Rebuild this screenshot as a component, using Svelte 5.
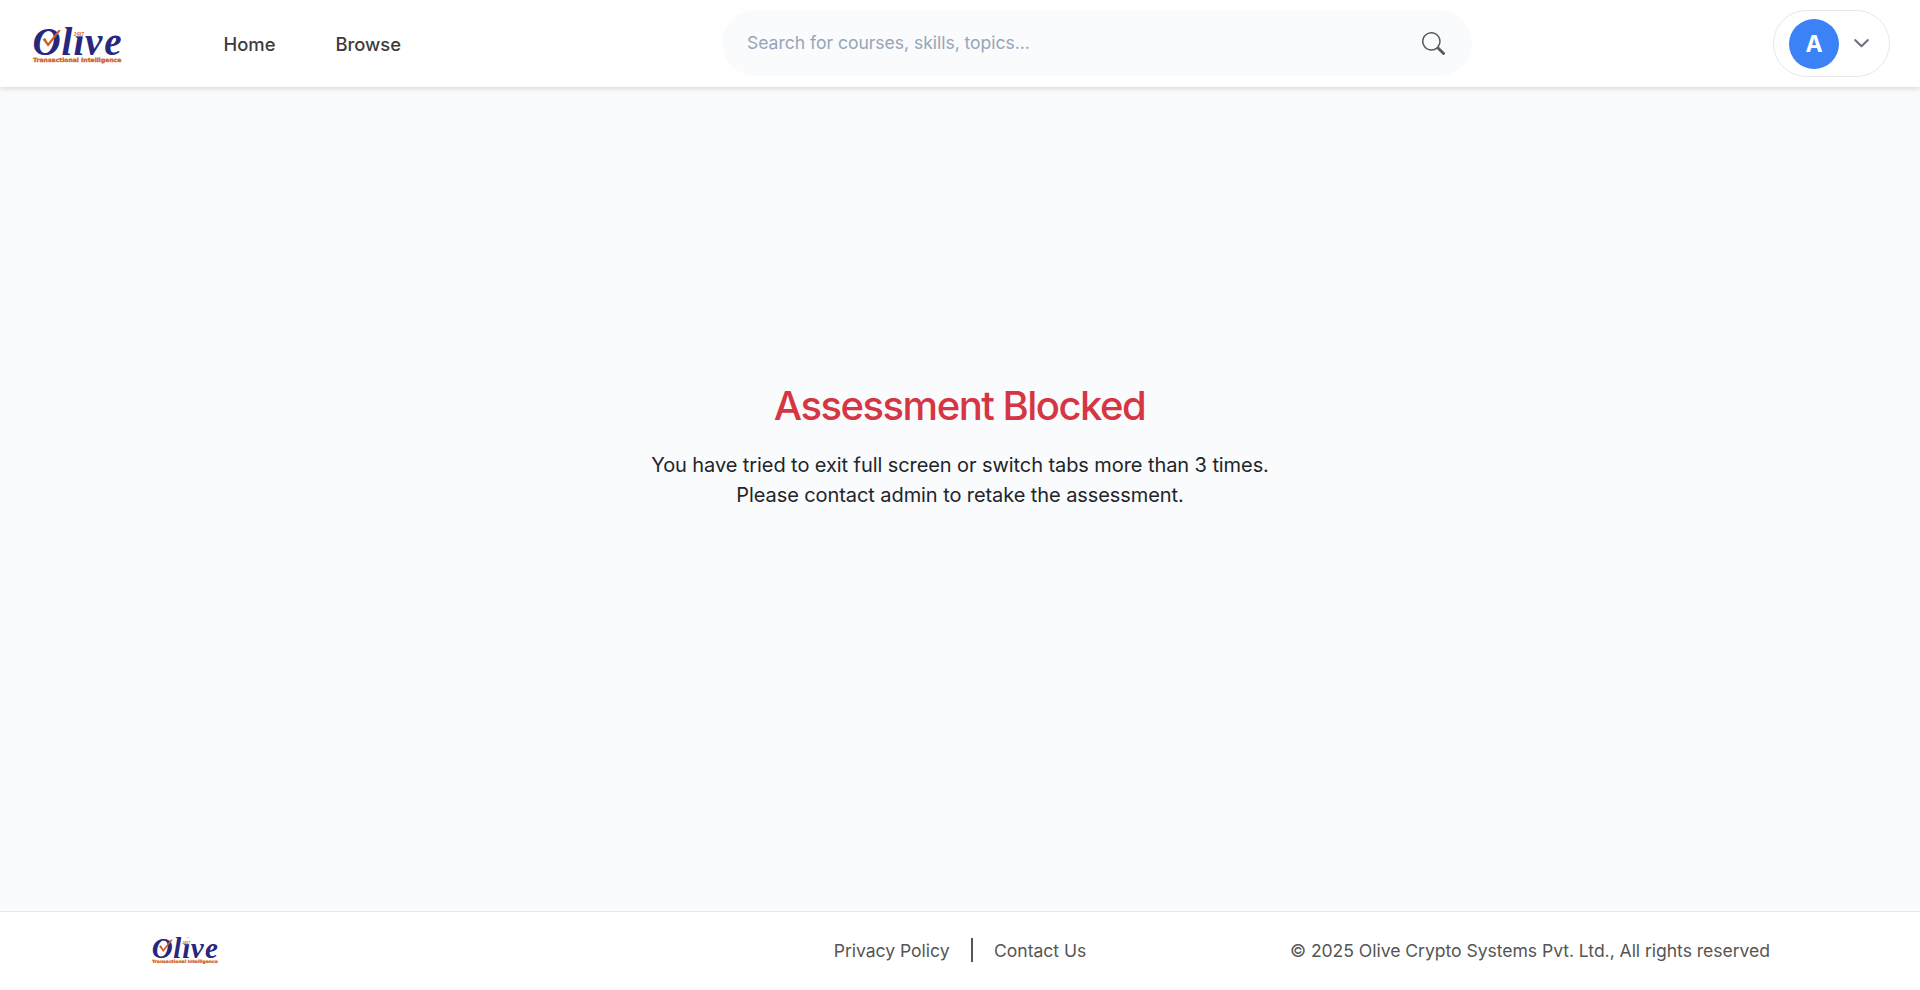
<script>
  const nav = ['Home', 'Browse'];
</script>

{#snippet logo(width)}
  <svg class="logo" {width} height={width * 0.4} viewBox="0 0 90 36" role="img" aria-label="Olive Transactional Intelligence">
    <text y="27" x="-0.5 28.5 40.5 52 71.3" class="word">Olive</text>
    <path d="M40 -1h12v9.3h-12z" fill="#fff" />
    <path d="M9.5 11.2l2.6-1.3 3 5.2L25.5 2l2.4.2-12.8 16.6z" fill="#cf5f20" />
    <text x="41" y="8" textLength="10" lengthAdjust="spacingAndGlyphs" class="mark">24X7</text>
    <text x="0" y="33.8" textLength="88.5" lengthAdjust="spacingAndGlyphs" class="tag">Transactional Intelligence</text>
  </svg>
{/snippet}

<div class="page">
  <header>
    <div class="brand">{@render logo(90)}</div>
    <nav>
      {#each nav as item}<a href="#top">{item}</a>{/each}
    </nav>
    <div class="search">
      <span>Search for courses, skills, topics...</span>
      <svg width="23" height="23" viewBox="0 0 16 16" fill="#5b5b5b" aria-hidden="true">
        <path d="M11.742 10.344a6.5 6.5 0 1 0-1.397 1.398h-.001q.044.06.098.115l3.85 3.85a1 1 0 0 0 1.415-1.414l-3.85-3.85a1 1 0 0 0-.115-.1zM12 6.5a5.5 5.5 0 1 1-11 0 5.5 5.5 0 0 1 11 0" />
      </svg>
    </div>
    <button class="profile" aria-label="Account">
      <span class="avatar">A</span>
      <svg width="17" height="17" viewBox="0 0 16 16" fill="none" stroke="#6b7080" stroke-width="1.9" stroke-linecap="round" stroke-linejoin="round" aria-hidden="true">
        <path d="M2 4.8l6 5.8 6-5.8" />
      </svg>
    </button>
  </header>

  <main>
    <h1>Assessment Blocked</h1>
    <p>You have tried to exit full screen or switch tabs more than 3 times.<br />Please contact admin to retake the assessment.</p>
  </main>

  <footer>
    <div class="foot-brand">{@render logo(67)}</div>
    <div class="links">
      <a href="#privacy">Privacy Policy</a>
      <i></i>
      <a href="#contact">Contact Us</a>
    </div>
    <div class="copy">© 2025 Olive Crypto Systems Pvt. Ltd., All rights reserved</div>
  </footer>
</div>

<style>
  :global(body) { margin: 0; }
  .page {
    box-sizing: border-box;
    height: 990px;
    display: flex;
    flex-direction: column;
    background: #f9fbfd;
    font-family: Inter, sans-serif;
    overflow: hidden;
  }
  a { color: inherit; text-decoration: none; }
  header {
    flex: none;
    height: 87px;
    box-sizing: border-box;
    padding: 0 30px 0 33px;
    display: flex;
    align-items: center;
    background: #fff;
    box-shadow: 0 2px 5px rgba(0, 0, 0, 0.13);
    z-index: 1;
  }
  .logo { display: block; overflow: visible; }
  .word { font: italic bold 39px "Liberation Serif", serif; fill: #27277f; }
  .mark { font: italic bold 5px "Liberation Sans", sans-serif; fill: #d26422; }
  .tag { font: bold 5.8px "DejaVu Sans", sans-serif; fill: #cf5f20; stroke: #cf5f20; stroke-width: 0.3; }
  .brand { width: 190.5px; padding-top: 4px; }
  .foot-brand { padding-top: 3px; }
  nav {
    width: 498.5px;
    display: flex;
    gap: 60px;
    font-size: 18.4px;
    font-weight: 500;
    color: #3c3c3c;
  }
  nav a { padding-top: 1px; }
  .search {
    width: 750px;
    height: 66px;
    box-sizing: border-box;
    margin-top: -1px;
    padding: 0 27px 0 25px;
    border-radius: 33px;
    background: #f9fbfd;
    display: flex;
    align-items: center;
    justify-content: space-between;
    font-size: 17.6px;
    letter-spacing: -0.05px;
    color: #98a5b8;
  }
  .search span { padding-bottom: 2px; }
  .profile {
    width: 117px;
    height: 67px;
    margin-left: auto;
    padding: 0 19px 0 15px;
    display: flex;
    align-items: center;
    justify-content: space-between;
    border: 1px solid #e4e8eb;
    border-radius: 34px;
    background: #fff;
  }
  .avatar {
    width: 50px;
    height: 50px;
    border-radius: 50%;
    background: #3b82f6;
    color: #fff;
    font: 700 23px/50px Inter, sans-serif;
    text-align: center;
  }
  main {
    flex: 1;
    padding-top: 295px;
    text-align: center;
    color: #212529;
  }
  h1 { margin: 0 0 20px; font-size: 40px; line-height: 48px; font-weight: 500; letter-spacing: -1.5px; text-indent: -1px; color: #d63644; }
  p { margin: 0; font-size: 20px; line-height: 30px; letter-spacing: -0.08px; }
  footer {
    flex: none;
    height: 79px;
    box-sizing: border-box;
    padding: 0 150px 2px 152px;
    border-top: 1px solid #e5e7eb;
    background: #fff;
    display: grid;
    grid-template-columns: 1fr auto 1fr;
    align-items: center;
    font-size: 17.6px;
    letter-spacing: -0.05px;
    color: #555;
  }
  .links { display: flex; align-items: center; gap: 21.5px; margin-right: 2px; }
  .links i { width: 1.5px; height: 24px; background: #555; }
  .copy { text-align: right; }
</style>
